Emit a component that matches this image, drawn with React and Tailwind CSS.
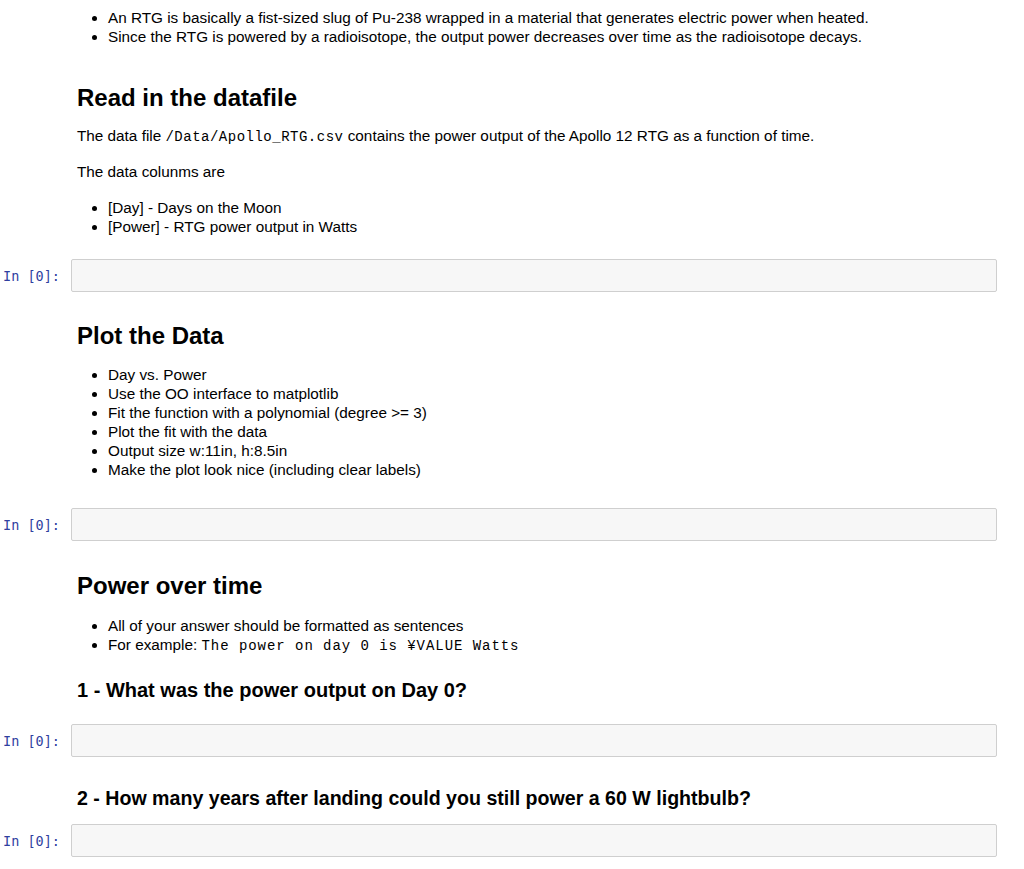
import React from "react";

const SANS = { fontFamily: '"Liberation Sans", Arial, sans-serif' };
const MONO = '"Liberation Mono", "DejaVu Sans Mono", monospace';

function CodeCell({ mt }) {
  return (
    <div className={`flex items-center ${mt}`}>
      <div
        className="w-[71px] shrink-0 pl-[3px] text-[13.5px] leading-[20px] text-[#303F9F]"
        style={{ fontFamily: '"DejaVu Sans Mono", monospace' }}
      >
        In [0]:
      </div>
      <div className="h-[33px] flex-1 rounded-[2px] border border-[#cfcfcf] bg-[#f7f7f7]" />
    </div>
  );
}

function Bullets({ items, mt }) {
  return (
    <ul className={`ml-[77px] list-disc pl-[31px] text-[15.3px] leading-[19px] text-black ${mt}`}>
      {items.map((it, i) => (
        <li key={i}>{it}</li>
      ))}
    </ul>
  );
}

export default function App() {
  return (
    <div className="min-h-[869px] w-[1024px] bg-white pr-[27px] pt-[8px]" style={SANS}>
      <Bullets
        items={[
          "An RTG is basically a fist-sized slug of Pu-238 wrapped in a material that generates electric power when heated.",
          "Since the RTG is powered by a radioisotope, the output power decreases over time as the radioisotope decays.",
        ]}
      />
      <h2 className="ml-[77px] mt-[38px] text-[24px] font-bold leading-[28px] text-black">
        Read in the datafile
      </h2>
      <p className="ml-[77px] mt-[14px] text-[15.3px] leading-[19px] text-black">
        The data file{" "}
        <code className="text-[14px] tracking-[0.5px]" style={{ fontFamily: MONO }}>
          /Data/Apollo_RTG.csv
        </code>{" "}
        contains the power output of the Apollo 12 RTG as a function of time.
      </p>
      <p className="ml-[77px] mt-[15px] text-[15.3px] leading-[19px] text-black">The data colunms are</p>
      <Bullets mt="mt-[17px]" items={["[Day] - Days on the Moon", "[Power] - RTG power output in Watts"]} />
      <CodeCell mt="mt-[23px]" />

      <h2 className="ml-[77px] mt-[30px] text-[24px] font-bold leading-[28px] text-black">Plot the Data</h2>
      <Bullets
        mt="mt-[15px]"
        items={[
          "Day vs. Power",
          "Use the OO interface to matplotlib",
          "Fit the function with a polynomial (degree >= 3)",
          "Plot the fit with the data",
          "Output size w:11in, h:8.5in",
          "Make the plot look nice (including clear labels)",
        ]}
      />
      <CodeCell mt="mt-[29px]" />

      <h2 className="ml-[77px] mt-[31px] text-[24px] font-bold leading-[28px] text-black">Power over time</h2>
      <Bullets
        mt="mt-[16px]"
        items={[
          "All of your answer should be formatted as sentences",
          <>
            For example:{" "}
            <code className="text-[14px] tracking-[0.95px]" style={{ fontFamily: MONO }}>
              The power on day 0 is ¥VALUE Watts
            </code>
          </>,
        ]}
      />
      <h3 className="ml-[77px] mt-[22px] text-[20px] font-bold leading-[24px] text-black">
        1 - What was the power output on Day 0?
      </h3>
      <CodeCell mt="mt-[22px]" />
      <h3 className="ml-[77px] mt-[29px] text-[19.6px] font-bold leading-[24px] text-black">
        2 - How many years after landing could you still power a 60 W lightbulb?
      </h3>
      <CodeCell mt="mt-[14px]" />
    </div>
  );
}
